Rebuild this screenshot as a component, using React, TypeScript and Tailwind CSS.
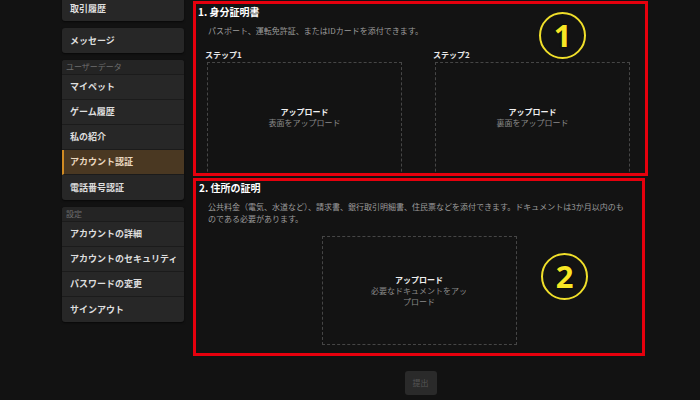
import React from 'react';

const jp = '"Noto Sans CJK JP", "Noto Sans", sans-serif';

type Item = { label: string; active?: boolean };

const userData: Item[] = [
  { label: 'マイペット' },
  { label: 'ゲーム履歴' },
  { label: '私の紹介' },
  { label: 'アカウント認証', active: true },
  { label: '電話番号認証' },
];

const settings: Item[] = [
  { label: 'アカウントの詳細' },
  { label: 'アカウントのセキュリティ' },
  { label: 'パスワードの変更' },
  { label: 'サインアウト' },
];

function MenuRow({ item, last }: { item: Item; last?: boolean }) {
  return (
    <div
      className={
        'flex h-[25px] items-center text-[9px] font-bold ' +
        (last ? '' : 'border-b border-[#1b1b1b] ') +
        (item.active
          ? 'border-l-2 border-l-[#d08a22] bg-[#4a3822] pl-[6px] text-[#ead9c0]'
          : 'pl-[8px] text-[#dedede]')
      }
    >
      {item.label}
    </div>
  );
}

function MenuGroup({ title, items }: { title: string; items: Item[] }) {
  return (
    <div className="overflow-hidden rounded-[3px] bg-[#272727] shadow-[0_1px_2px_rgba(0,0,0,0.6)]">
      <div className="flex h-[15px] items-center border-b border-[#1b1b1b] bg-[#242424] pl-[4px] text-[8px] text-[#6e6e6e]">
        {title}
      </div>
      {items.map((it, i) => (
        <MenuRow key={it.label} item={it} last={i === items.length - 1} />
      ))}
    </div>
  );
}

function Sidebar() {
  return (
    <div className="ml-[62px] -mt-[4px] flex w-[122px] shrink-0 flex-col gap-[7px]">
      <div className="overflow-hidden rounded-[3px] bg-[#272727] shadow-[0_1px_2px_rgba(0,0,0,0.6)]">
        <MenuRow item={{ label: '取引履歴' }} last />
      </div>
      <div className="overflow-hidden rounded-[3px] bg-[#272727] shadow-[0_1px_2px_rgba(0,0,0,0.6)]">
        <MenuRow item={{ label: 'メッセージ' }} last />
      </div>
      <MenuGroup title="ユーザーデータ" items={userData} />
      <MenuGroup title="設定" items={settings} />
    </div>
  );
}

function UploadBox({ sub, className }: { sub: string; className: string }) {
  return (
    <div
      className={
        'flex flex-col items-center border border-dashed border-[#464646] text-center ' +
        className
      }
    >
      <div className="text-[8px] font-bold leading-[11px] text-[#f0f0f0]">アップロード</div>
      <div className="w-[100px] text-[8px] leading-[11px] text-[#8a8a8a]">{sub}</div>
    </div>
  );
}

function Badge({ n, className }: { n: string; className: string }) {
  return (
    <div
      className={
        'absolute flex h-[47px] w-[47px] items-center justify-center rounded-full border-2 border-[#f0df2a] ' +
        className
      }
    >
      <span
        className="text-[31px] font-bold leading-none text-[#f7e625]"
        style={{ fontFamily: '"Noto Sans", sans-serif', textShadow: '0 0 2px #000' }}
      >
        {n}
      </span>
    </div>
  );
}

export default function App() {
  return (
    <div
      className="flex h-[400px] w-[700px] overflow-hidden bg-[#121212]"
      style={{ fontFamily: jp }}
    >
      <Sidebar />

      <div className="ml-[9px] flex w-[455px] flex-col">
        {/* 1. identity */}
        <section className="relative mt-[1px] h-[175px] overflow-hidden border-[3px] border-[#e6000d] bg-[#131313]">
          <Badge n="1" className="left-[343px] top-[8px]" />
          <h2 className="pl-[2px] pt-[1px] text-[10px] font-bold leading-[14px] text-white">
            1. 身分証明書
          </h2>
          <p className="mt-[6px] pl-[12px] text-[8px] leading-[12px] text-[#9c9c9c]">
            パスポート、運転免許証、またはIDカードを添付できます。
          </p>
          <div className="mt-[12px] flex gap-[31px] pl-[9px]">
            <div className="flex flex-col">
              <div className="text-[8px] font-bold leading-[12px] text-[#e8e8e8]">ステップ1</div>
              <UploadBox sub="表面をアップロード" className="ml-[2px] mt-[1px] h-[130px] w-[195px] pt-[43px]" />
            </div>
            <div className="flex flex-col">
              <div className="text-[8px] font-bold leading-[12px] text-[#e8e8e8]">ステップ2</div>
              <UploadBox sub="裏面をアップロード" className="ml-[2px] mt-[1px] h-[130px] w-[195px] pt-[43px]" />
            </div>
          </div>
        </section>

        {/* 2. address */}
        <section className="relative mt-[2px] w-[452px] border-[3px] border-[#e6000d] bg-[#131313] pb-[8px]">
          <Badge n="2" className="left-[345px] top-[72px]" />
          <h2 className="pl-[3px] text-[10px] font-bold leading-[14px] text-white">2. 住所の証明</h2>
          <p className="mt-[6px] pl-[12px] pr-[14px] text-[8px] leading-[12px] text-[#9c9c9c]">
            公共料金（電気、水道など）、請求書、銀行取引明細書、住民票などを添付できます。ドキュメントは3か月以内のものである必要があります。
          </p>
          <UploadBox
            sub="必要なドキュメントをアップロード"
            className="mx-auto mt-[11px] h-[109px] w-[195px] justify-center"
          />
        </section>

        <button className="mx-auto mt-[15px] flex h-[24px] w-[32px] items-center justify-center rounded-[3px] bg-[#2a2a2a] text-[8px] text-[#555]">
          提出
        </button>
      </div>
    </div>
  );
}
